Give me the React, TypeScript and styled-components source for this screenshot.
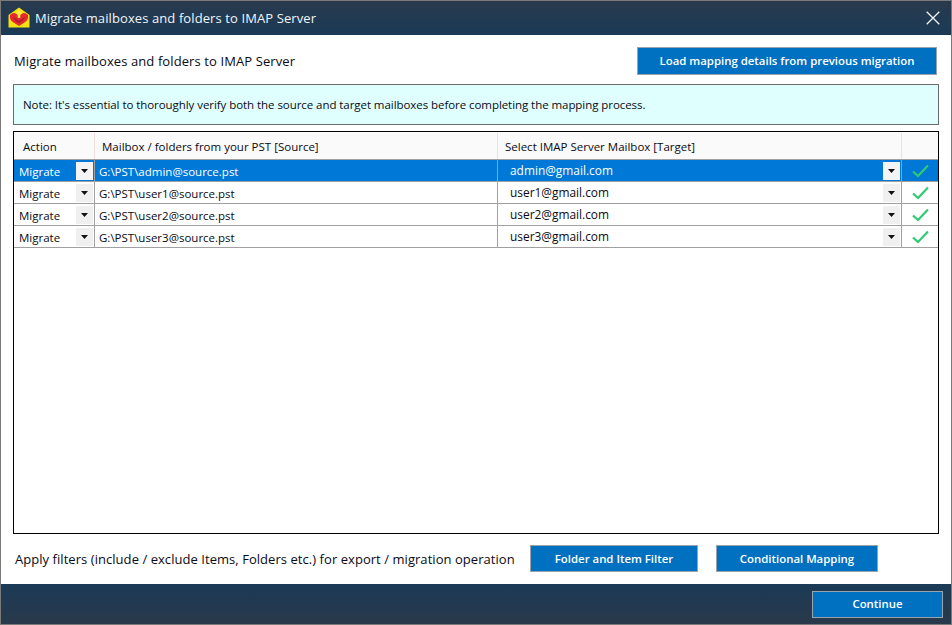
import styled, { createGlobalStyle } from "styled-components";

const GlobalStyle = createGlobalStyle`
    html, body {
        margin: 0;
        padding: 0;
        background: #fff;
    }
    body {
        font-family: "Open Sans", "Noto Sans", "Liberation Sans", sans-serif;
        color: #0a0a14;
    }
`;

const rows = [
    { source: "G:\\PST\\admin@source.pst", target: "admin@gmail.com", selected: true },
    { source: "G:\\PST\\user1@source.pst", target: "user1@gmail.com", selected: false },
    { source: "G:\\PST\\user2@source.pst", target: "user2@gmail.com", selected: false },
    { source: "G:\\PST\\user3@source.pst", target: "user3@gmail.com", selected: false },
];

const Logo = () => (
    <svg width="22" height="22" viewBox="0 0 22 22">
        <path d="M0.5 8 L11 0.5 L21.5 8 V20.5 H0.5 Z" fill="#f7e00f" />
        <path d="M2 8 Q5.5 4.5 8.5 7 L11 9 L13.5 7 Q16.5 4.5 20 8 Q21 12.5 16.5 15.5 Q13.5 17 11 19 Q8.5 17 5.5 15.5 Q1 12.5 2 8 Z" fill="#e32a2e" />
        <path d="M5 10 Q8 11 11 14 Q14 11 17 10 Q15.5 14 11 16 Q6.5 14 5 10 Z" fill="#b81c2a" />
        <path d="M11 2.5 L14.5 6.5 H12.3 V11 H9.7 V6.5 H7.5 Z" fill="#f8e64a" />
    </svg>
);

const Caret = () => (
    <svg width="7" height="4" viewBox="0 0 7 4">
        <path d="M0 0 H7 L3.5 4 Z" fill="#111" />
    </svg>
);

const Tick = () => (
    <svg width="17" height="14" viewBox="0 0 17 14">
        <path d="M1 7.5 L6 12 L16 1.5" fill="none" stroke="#2ecc71" strokeWidth="2.2" />
    </svg>
);

const CloseIcon = () => (
    <svg width="14" height="14" viewBox="0 0 14 14">
        <path d="M0.7 0.7 L13.3 13.3 M13.3 0.7 L0.7 13.3" stroke="#f2f4f6" strokeWidth="1.3" />
    </svg>
);

export default function App() {
    return (
        <>
            <GlobalStyle />
            <Window>
                <TitleBar>
                    <Logo />
                    <TitleText>Migrate mailboxes and folders to IMAP Server</TitleText>
                    <CloseButton><CloseIcon /></CloseButton>
                </TitleBar>
                <Content>
                    <HeadRow>
                        <Heading>Migrate mailboxes and folders to IMAP Server</Heading>
                        <BlueButton $width={300} $height={28}>Load mapping details from previous migration</BlueButton>
                    </HeadRow>
                    <Note>Note: It's essential to thoroughly verify both the source and target mailboxes before completing the mapping process.</Note>
                    <TableBox>
                        <HeaderRow>
                            <HeaderCell>Action</HeaderCell>
                            <HeaderCell>Mailbox / folders from your PST [Source]</HeaderCell>
                            <HeaderCell>Select IMAP Server Mailbox [Target]</HeaderCell>
                            <HeaderCell />
                        </HeaderRow>
                        {rows.map((row) => (
                            <DataRow key={row.source} $selected={row.selected}>
                                <ComboCell>
                                    <ActionText>Migrate</ActionText>
                                    <DropButton $selected={row.selected}><Caret /></DropButton>
                                </ComboCell>
                                <SourceCell>{row.source}</SourceCell>
                                <ComboCell>
                                    <TargetText>{row.target}</TargetText>
                                    <DropButton $selected={row.selected}><Caret /></DropButton>
                                </ComboCell>
                                <TickCell><Tick /></TickCell>
                            </DataRow>
                        ))}
                    </TableBox>
                    <FilterRow>
                        <FilterLabel>Apply filters (include / exclude Items, Folders etc.) for export / migration operation</FilterLabel>
                        <BlueButton $width={168} $height={27}>Folder and Item Filter</BlueButton>
                        <BlueButton $width={162} $height={27}>Conditional Mapping</BlueButton>
                    </FilterRow>
                </Content>
                <Footer>
                    <BlueButton $width={131} $height={27}>Continue</BlueButton>
                </Footer>
            </Window>
        </>
    );
}

const Window = styled.div`
    width: 952px;
    height: 625px;
    box-sizing: border-box;
    border: 1px solid #7a7a7a;
    display: flex;
    flex-direction: column;
    overflow: hidden;
`;

const TitleBar = styled.div`
    height: 34px;
    flex: none;
    display: flex;
    align-items: center;
    padding: 0 9px 0 7px;
    background: linear-gradient(#2a3a4d, #1a3a57);
`;

const TitleText = styled.div`
    flex: 1;
    margin-left: 5px;
    color: #f0f6fb;
    font-size: 13px;
    letter-spacing: 0.1px;
`;

const CloseButton = styled.div`
    display: flex;
    margin-right: 2px;
`;

const Content = styled.div`
    flex: 1;
    display: flex;
    flex-direction: column;
    padding: 12px 12px 0;
    min-height: 0;
`;

const HeadRow = styled.div`
    display: flex;
    align-items: center;
    justify-content: space-between;
    padding-right: 2px;
    padding-left: 1px;
    height: 28px;
`;

const Heading = styled.div`
    font-size: 13px;
    letter-spacing: 0.1px;
`;

const BlueButton = styled.div<{ $width: number; $height: number }>`
    width: ${(p) => p.$width}px;
    height: ${(p) => p.$height}px;
    box-sizing: border-box;
    display: flex;
    align-items: center;
    justify-content: center;
    flex: none;
    padding-bottom: 2px;
    background: #0070c0;
    border: 1px solid #9aa4ae;
    color: #fff;
    font-size: 11.4px;
    font-weight: 600;
`;

const Note = styled.div`
    margin-top: 9px;
    height: 41px;
    box-sizing: border-box;
    border: 1px solid #6b6b6b;
    background: #dfffff;
    display: flex;
    align-items: center;
    padding: 0 0 1px 9px;
    font-size: 11.5px;
    letter-spacing: -0.06px;
`;

const TableBox = styled.div`
    margin-top: 6px;
    flex: 1;
    min-height: 0;
    border: 1px solid #000;
    padding: 1px 0 0 0;
    display: flex;
    flex-direction: column;
`;

const columns = `81px 403px 404px 1fr`;

const HeaderRow = styled.div`
    display: grid;
    grid-template-columns: ${columns};
    height: 26px;
    flex: none;
    background: #fafafa;
    border-bottom: 1px solid #a0a0a0;
`;

const HeaderCell = styled.div`
    display: flex;
    align-items: center;
    padding: 1px 0 0 7px;
    font-size: 11.5px;
    border-right: 1px solid #f0dfdf;
    &:first-child {
        padding-left: 9px;
    }
    &:last-child {
        border-right: none;
    }
`;

const DataRow = styled.div<{ $selected: boolean }>`
    display: grid;
    grid-template-columns: ${columns};
    height: 22px;
    flex: none;
    box-sizing: border-box;
    border-bottom: 1px solid #a0a0a0;
    font-size: 11.5px;
    background: ${(p) => (p.$selected ? "#0078d7" : "#fff")};
    color: ${(p) => (p.$selected ? "#fff" : "#0a0a14")};
    > div {
        border-right: 1px solid #a0a0a0;
    }
    > div:last-child {
        border-right: none;
    }
`;

const ComboCell = styled.div`
    display: flex;
    align-items: center;
    justify-content: space-between;
    padding-right: 1px;
`;

const ActionText = styled.span`
    padding: 1px 0 0 5px;
`;

const TargetText = styled.span`
    padding: 0 0 2px 12px;
    font-size: 11.9px;
`;

const DropButton = styled.div<{ $selected: boolean }>`
    width: 17px;
    height: 18px;
    display: flex;
    align-items: center;
    justify-content: center;
    background: ${(p) => (p.$selected ? "#f4f4f4" : "#f0f0f0")};
`;

const SourceCell = styled.div`
    display: flex;
    align-items: center;
    padding: 1px 0 0 4px;
`;

const TickCell = styled.div`
    display: flex;
    align-items: center;
    justify-content: center;
`;

const FilterRow = styled.div`
    height: 49px;
    flex: none;
    display: flex;
    align-items: center;
    padding: 0 0 1px 2px;
    ${BlueButton} {
        padding-bottom: 0;
    }
    > div:last-child {
        margin-left: 18px;
    }
`;

const FilterLabel = styled.div`
    width: 515px;
    flex: none;
    font-size: 13px;
    letter-spacing: 0.05px;
`;

const Footer = styled.div`
    height: 40px;
    flex: none;
    display: flex;
    align-items: center;
    justify-content: flex-end;
    padding-right: 8px;
    background: linear-gradient(#1b3a56, #2a394b);
`;
